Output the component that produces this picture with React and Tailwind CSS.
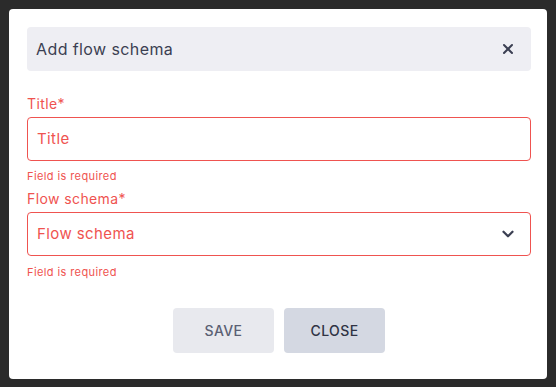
import { ChevronDown, X } from 'lucide-react'

export default function App() {
  return (
    <div className="min-h-screen w-full bg-[#2b2b2b] p-[9px] font-['Inter',sans-serif] tracking-[0.4px]">
      <div className="flex w-[538px] flex-col rounded-[4px] bg-white pb-[26px] pl-[18px] pr-[16px] pt-[18px]">
        <div className="flex h-[44px] items-center justify-between rounded-[4px] bg-[#eeeef3] pl-[9px] pr-[15px]">
          <span className="text-[16px] text-[#3b3f52]">Add flow schema</span>
          <X size={16} strokeWidth={3} className="text-[#3b3f52]" />
        </div>

        <label className="mt-[24px] mb-[4px] text-[14px] leading-[18px] text-[#ef5350]">Title*</label>
        <div className="flex h-[44px] items-center rounded-[4px] border border-[#ef5350] px-[9px]">
          <span className="text-[15px] text-[#ef5350]">Title</span>
        </div>
        <p className="mt-[7px] text-[11px] leading-[16px] text-[#ef5350]">Field is required</p>

        <label className="mt-[6px] mb-[4px] text-[14px] leading-[18px] text-[#ef5350]">Flow schema*</label>
        <div className="flex h-[44px] items-center justify-between rounded-[4px] border border-[#ef5350] pl-[9px] pr-[13px]">
          <span className="text-[15px] text-[#ef5350]">Flow schema</span>
          <ChevronDown size={18} strokeWidth={3} className="text-[#3b3f52]" />
        </div>
        <p className="mt-[8px] text-[11px] leading-[16px] text-[#ef5350]">Field is required</p>

        <div className="mt-[28px] flex justify-center gap-[10px]">
          <button type="button" className="h-[45px] w-[101px] rounded-[4px] bg-[#e8e9ee] text-[14px] font-medium text-[#5a5f73]">
            SAVE
          </button>
          <button type="button" className="h-[45px] w-[101px] rounded-[4px] bg-[#d4d8e2] text-[14px] font-medium text-[#2f3344]">
            CLOSE
          </button>
        </div>
      </div>
    </div>
  )
}
